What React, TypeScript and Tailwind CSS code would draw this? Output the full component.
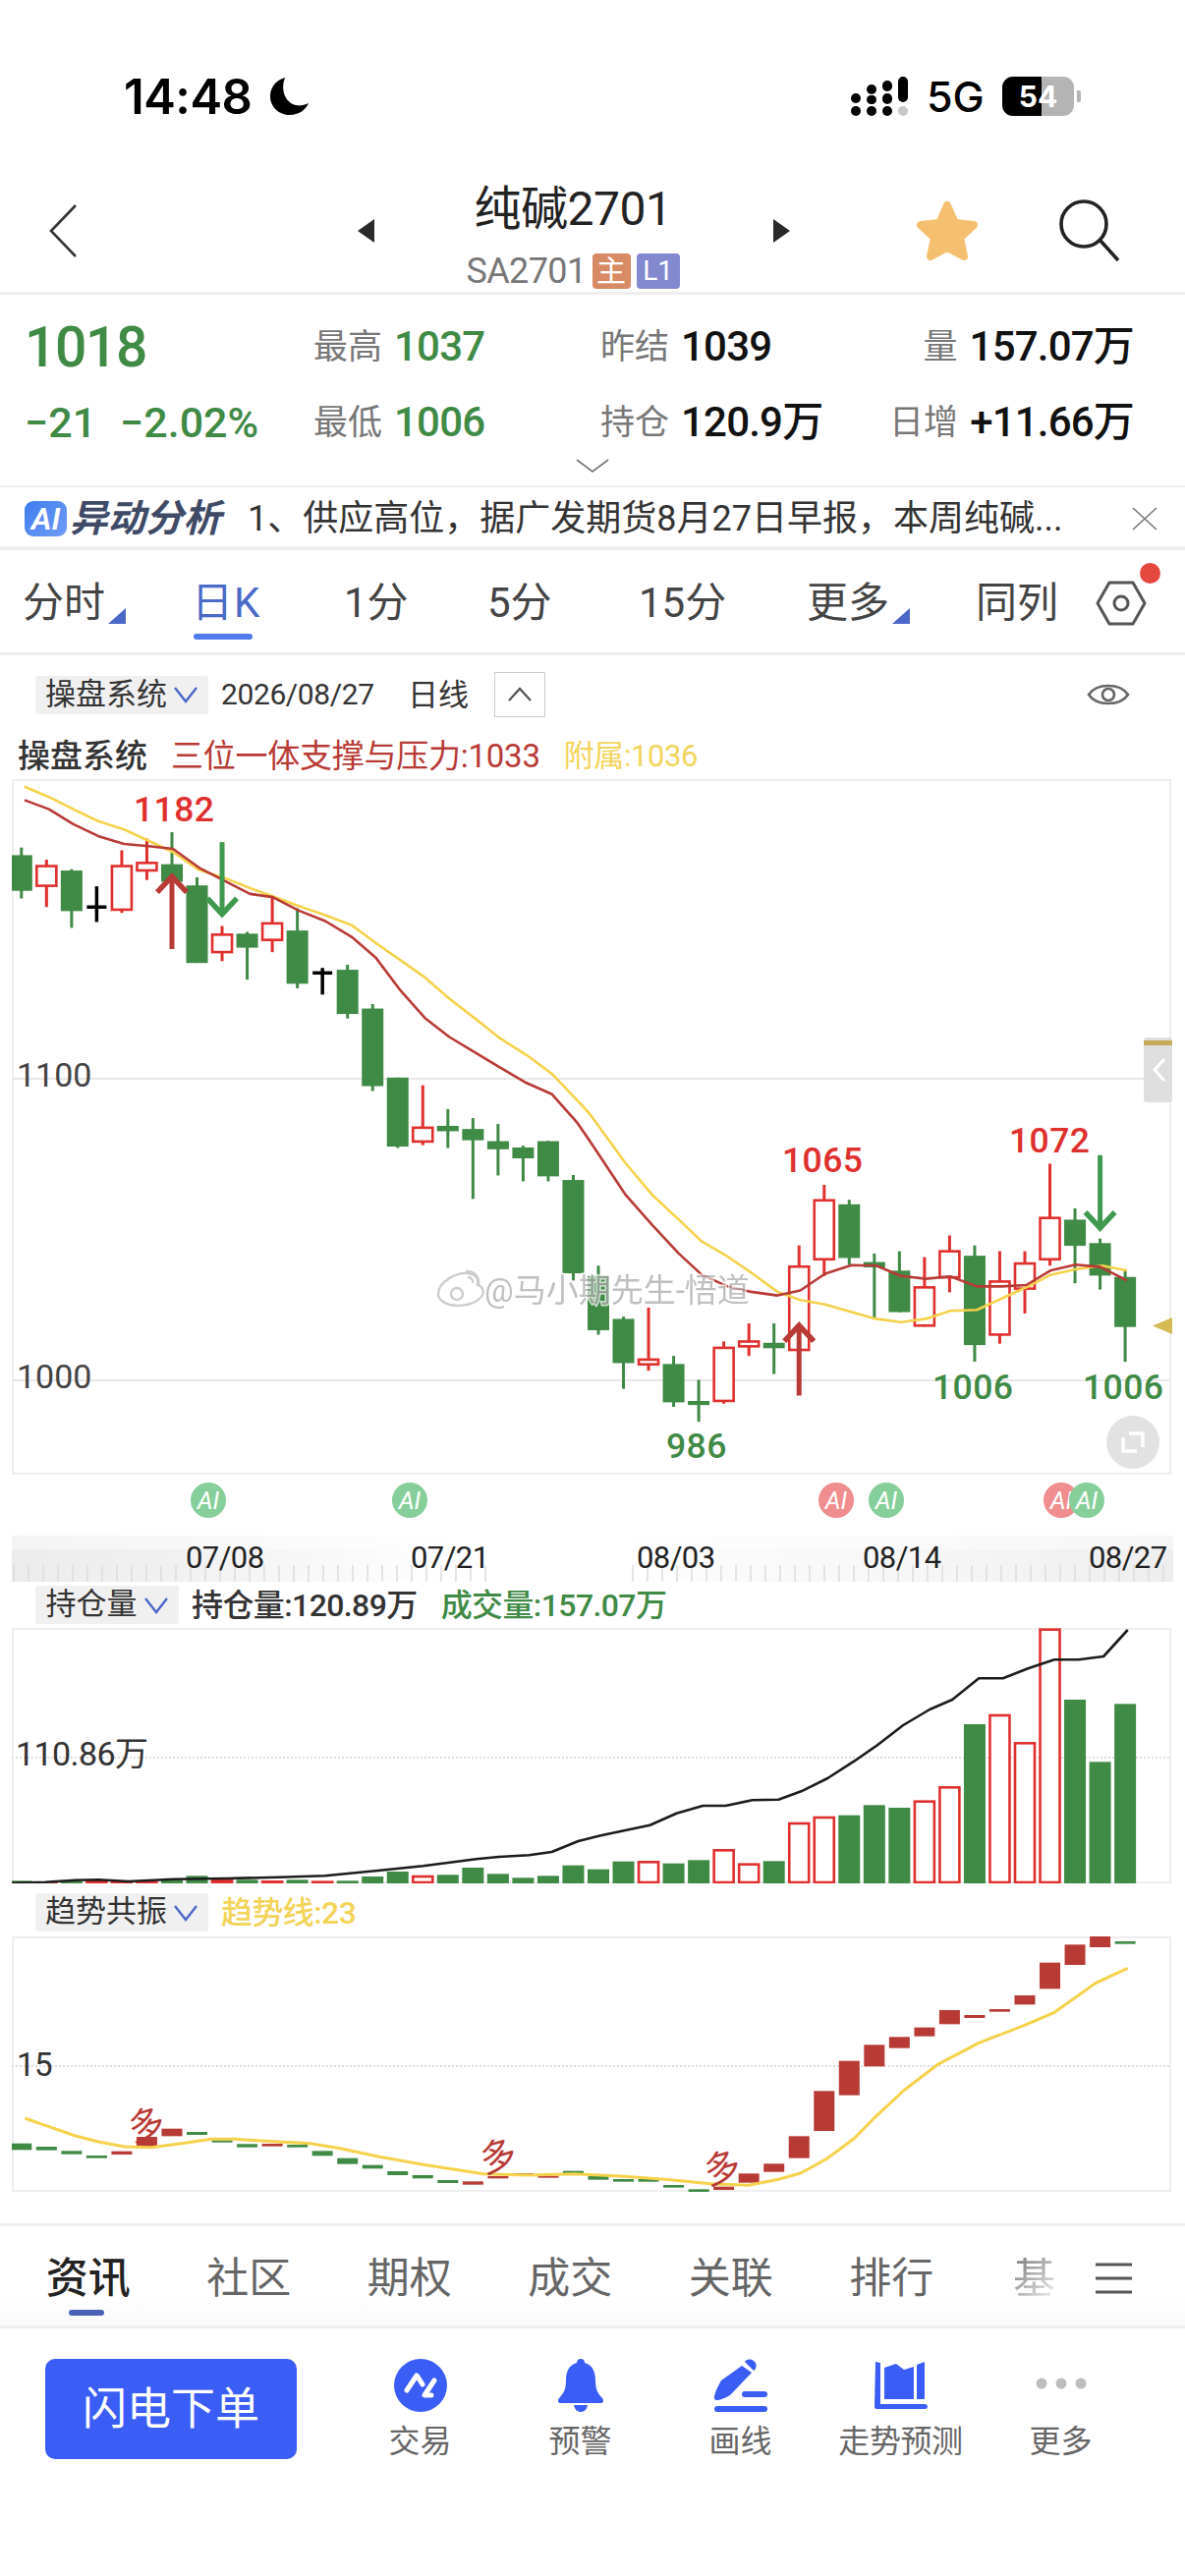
import React from "react";

const G = "#3f8a45";
const R = "#e0302e";
const X = (i: number) => 21.8 + 25.53 * i;
const Y = (z: number) => 780 + z / 2.178;
const X3 = (z: number) => z / 2.613;
const X4 = (z: number) => 600 + z / 2.587;

// type, hi, top, bottom, lo (zoom units)
const candles: [string, number, number, number, number][] = [
  ["g", 180, 197, 276, 293], ["r", 207, 219, 267, 312], ["g", 228, 231, 321, 358], ["k", 266, 312, 312, 345],
  ["r", 186, 219, 320, 325], ["r", 160, 212, 233, 252], ["g", 146, 217, 256, 258], ["g", 246, 264, 436, 436],
  ["r", 354, 371, 414, 432], ["g", 367, 371, 402, 473], ["r", 290, 346, 387, 412], ["g", 315, 364, 482, 492],
  ["k", 447, 458, 458, 506], ["g", 440, 451, 549, 559], ["g", 527, 537, 709, 720], ["g", 690, 690, 843, 846],
  ["r", 707, 799, 834, 840], ["g", 760, 797, 809, 846], ["g", 780, 804, 829, 959], ["g", 793, 831, 849, 907],
  ["g", 841, 845, 869, 920], ["g", 830, 831, 909, 920], ["g", 906, 917, 1124, 1140], ["g", 1107, 1130, 1250, 1260],
  ["g", 1220, 1225, 1323, 1380], ["r", 1200, 1313, 1328, 1340], ["g", 1307, 1325, 1410, 1420], ["g", 1360, 1407, 1416, 1453],
  ["r", 1275, 1287, 1409, 1413], ["r", 1235, 1273, 1288, 1307], ["g", 1235, 1278, 1290, 1347], ["r", 1062, 1107, 1296, 1296],
  ["r", 928, 960, 1095, 1130], ["g", 961, 971, 1090, 1105], ["g", 1080, 1099, 1111, 1225], ["g", 1075, 1118, 1210, 1210],
  ["r", 1088, 1153, 1242, 1242], ["r", 1040, 1073, 1135, 1166], ["g", 1062, 1085, 1283, 1320], ["r", 1075, 1140, 1262, 1280],
  ["r", 1075, 1100, 1160, 1213], ["r", 881, 999, 1095, 1107], ["g", 980, 1005, 1063, 1146], ["g", 1047, 1057, 1129, 1160],
  ["g", 1115, 1132, 1243, 1320],
];

const mk = (a: number[][], b: number[][]) =>
  [...a.map(([x, y]) => [X3(x), Y(y)]), ...b.map(([x, y]) => [X4(x), Y(y)])];
const toPath = (p: number[][]) => p.map(([x, y], i) => `${i ? "L" : "M"}${x.toFixed(1)} ${y.toFixed(1)}`).join("");

const redLine = mk(
  [[65, 75], [130, 95], [195, 128], [262, 155], [330, 172], [395, 177], [460, 183], [530, 225], [600, 255], [665, 283], [725, 290], [795, 320], [865, 343], [935, 378], [1000, 425], [1065, 497], [1130, 558], [1195, 600], [1265, 635], [1330, 668], [1400, 702], [1468, 727], [1535, 790]],
  [[0, 830], [95, 950], [165, 1017], [235, 1080], [295, 1127], [360, 1152], [425, 1165], [495, 1173], [555, 1162], [620, 1125], [690, 1106], [755, 1107], [820, 1130], [885, 1136], [950, 1131], [1020, 1153], [1085, 1153], [1150, 1150], [1215, 1117], [1280, 1105], [1345, 1110], [1415, 1140]]
);
const yellowLine = mk(
  [[65, 45], [130, 68], [195, 95], [262, 122], [330, 140], [395, 165], [460, 190], [530, 230], [600, 248], [665, 270], [725, 288], [795, 310], [865, 330], [935, 352], [1000, 392], [1065, 430], [1130, 468], [1195, 515], [1265, 560], [1330, 603], [1400, 640], [1468, 682], [1535, 740]],
  [[0, 770], [95, 880], [165, 950], [235, 1005], [295, 1053], [360, 1085], [425, 1122], [495, 1165], [555, 1183], [620, 1193], [690, 1210], [755, 1225], [820, 1232], [885, 1225], [950, 1207], [1020, 1205], [1085, 1180], [1150, 1155], [1215, 1127], [1280, 1115], [1350, 1107], [1415, 1118]]
);

const Z5 = (z: number) => 1500 + z / 3;
const Z6 = (z: number) => 1920 + z / 3;

const volumes: [string, number][] = [
  ["g", 1243], ["r", 1247], ["g", 1245], ["r", 1243], ["r", 1245], ["r", 1245], ["g", 1240], ["g", 1228], ["r", 1240], ["g", 1240],
  ["r", 1243], ["g", 1240], ["r", 1244], ["g", 1243], ["g", 1230], ["g", 1215], ["r", 1227], ["g", 1225], ["g", 1203], ["g", 1222],
  ["g", 1234], ["g", 1228], ["g", 1196], ["g", 1208], ["g", 1184], ["r", 1183], ["g", 1190], ["g", 1180], ["r", 1147], ["r", 1190],
  ["g", 1183], ["r", 1065], ["r", 1047], ["g", 1043], ["g", 1012], ["g", 1020], ["r", 998], ["r", 955], ["g", 765], ["r", 735],
  ["r", 820], ["r", 473], ["g", 690], ["g", 880], ["g", 703],
];
const blackLine = [[16, 1250], [60, 1247], [100, 1241], [130, 1240], [170, 1245], [230, 1238], [300, 1236], [370, 1232], [430, 1228], [500, 1212], [560, 1198], [630, 1177], [660, 1170], [700, 1165], [730, 1155], [765, 1122], [795, 1105], [860, 1073], [895, 1037], [930, 1014], [960, 1014], [995, 997], [1030, 995], [1060, 970], [1095, 930], [1130, 878], [1160, 830], [1195, 768], [1230, 720], [1260, 690], [1295, 625], [1327, 625], [1360, 595], [1395, 568], [1427, 568], [1460, 558], [1492, 477]].map(([x, y]) => [x / 1.3, Z5(y)]);

const trend: [string, number, number][] = [
  ["g", 785, 805], ["g", 795, 806], ["g", 808, 818], ["g", 822, 830], ["r", 809, 819], ["r", 765, 795], ["r", 740, 763], ["g", 750, 759], ["g", 775, 782], ["g", 787, 797],
  ["r", 786, 794], ["g", 789, 797], ["g", 808, 823], ["g", 830, 848], ["g", 851, 862], ["g", 870, 882], ["g", 882, 892], ["g", 897, 906], ["r", 901, 911], ["r", 885, 892],
  ["r", 876, 882], ["r", 884, 890], ["g", 869, 877], ["g", 885, 896], ["g", 894, 902], ["g", 894, 902], ["g", 912, 920], ["g", 925, 935], ["r", 917, 927], ["r", 877, 905],
  ["r", 847, 872], ["r", 763, 830], ["r", 625, 747], ["r", 533, 638], ["r", 484, 550], ["r", 460, 494], ["r", 431, 458], ["r", 378, 421], ["r", 393, 402], ["r", 375, 383],
  ["r", 333, 361], ["r", 233, 313], ["r", 178, 240], ["r", 153, 186], ["g", 168, 176],
];
const trendLine = [[33, 708], [60, 730], [100, 762], [130, 780], [165, 795], [200, 797], [240, 785], [280, 772], [310, 772], [350, 778], [410, 785], [450, 800], [500, 825], [560, 850], [640, 878], [700, 882], [760, 878], [820, 885], [880, 895], [940, 908], [990, 913], [1030, 895], [1060, 875], [1095, 830], [1130, 770], [1160, 700], [1195, 625], [1240, 545], [1295, 478], [1355, 425], [1395, 385], [1450, 295], [1492, 250]].map(([x, y]) => [x / 1.3, Z6(y)]);

function Caret() {
  return (
    <svg width="26" height="18" viewBox="0 0 26 18" className="shrink-0">
      <path d="M2 2 L13 16 L24 2" fill="none" stroke="#4a66c8" strokeWidth="2.4" />
    </svg>
  );
}

function Pill({ label, w }: { label: string; w: string }) {
  return (
    <div className={`flex h-[39px] items-center justify-center gap-[6px] rounded-[3px] bg-[#f0f0f0] text-[31px] text-[#333] ${w}`}>
      <span>{label}</span>
      <Caret />
    </div>
  );
}

function Arrow({ x, from, tip, color, dir }: { x: number; from: number; tip: number; color: string; dir: 1 | -1 }) {
  return (
    <g stroke={color} fill="none" strokeWidth="5">
      <line x1={x} y1={from} x2={x} y2={tip + dir * 3} />
      <path d={`M${x - 15} ${tip + dir * 18} L${x} ${tip + dir * 2} L${x + 15} ${tip + dir * 18}`} strokeWidth="5.5" />
    </g>
  );
}

function Frame({ top, bottom }: { top: number; bottom: number }) {
  return (
    <g stroke="#eeeeee" strokeWidth="2">
      <line x1="13" y1={top} x2="13" y2={bottom} />
      <line x1="1191" y1={top} x2="1191" y2={bottom} />
      <line x1="12" y1={top + 1} x2="1192" y2={top + 1} />
      <line x1="12" y1={bottom - 1} x2="1192" y2={bottom - 1} />
    </g>
  );
}

function MainChart() {
  const labels: [string, number, number, string][] = [
    ["1182", 136, 836, R], ["1065", 796, 1193, R], ["1072", 1027, 1173, R],
    ["986", 678, 1484, G], ["1006", 949, 1424, G], ["1006", 1102, 1424, G],
  ];
  return (
    <svg className="mx-[12px] block h-[708px] w-[1182px]" viewBox="12 793 1182 708">
      <Frame top={793} bottom={1501} />
      <line x1="12" y1="1098" x2="1192" y2="1098" stroke="#e8e8e8" strokeWidth="2" />
      <line x1="12" y1="1405" x2="1192" y2="1405" stroke="#e8e8e8" strokeWidth="2" />
      <text x="17" y="1106" fontSize="34" fill="#444">1100</text>
      <text x="17" y="1413" fontSize="34" fill="#444">1000</text>
      {candles.map(([t, hi, top, bot, lo], i) => {
        const x = X(i);
        if (t === "k") {
          return (
            <g key={i} stroke="#000" strokeWidth="3.5">
              <line x1={x} y1={Y(hi)} x2={x} y2={Y(lo)} />
              <line x1={x - 10} y1={Y(top)} x2={x + 10} y2={Y(top)} />
            </g>
          );
        }
        if (t === "g") {
          return (
            <g key={i} fill={G}>
              <rect x={x - 1.5} y={Y(hi)} width="3" height={Y(lo) - Y(hi)} />
              <rect x={x - 11} y={Y(top)} width="22" height={Y(bot) - Y(top)} />
            </g>
          );
        }
        return (
          <g key={i}>
            <rect x={x - 1.5} y={Y(hi)} width="3" height={Y(lo) - Y(hi)} fill={R} />
            <rect x={x - 10} y={Y(top) + 1} width="20" height={Y(bot) - Y(top) - 2} fill="#fff" stroke={R} strokeWidth="2.6" />
          </g>
        );
      })}
      <path d={toPath(yellowLine)} fill="none" stroke="#f5d24b" strokeWidth="2.6" strokeLinejoin="round" />
      <path d={toPath(redLine)} fill="none" stroke="#b83a35" strokeWidth="2.6" strokeLinejoin="round" />
      <Arrow x={X(6)} from={Y(405)} tip={Y(240)} color="#b83a35" dir={1} />
      <Arrow x={X(8)} from={Y(168)} tip={Y(332)} color="#3f9a4f" dir={-1} />
      <Arrow x={X(31)} from={Y(1395)} tip={Y(1235)} color="#b83a35" dir={1} />
      <Arrow x={X(43)} from={Y(862)} tip={Y(1028)} color="#3f9a4f" dir={-1} />
      {labels.map(([t, x, y, c], i) => (
        <text key={i} x={x} y={y} fontSize="35.5" fontWeight="500" fill={c} letterSpacing="0.4">{t}</text>
      ))}
      <g opacity="0.75">
        <g fill="none" stroke="#bdbdbd" strokeWidth="2.4">
          <path d="M446 1317 c0 -12 18 -22 30 -21 c10 1 11 7 10 12 c5 1 7 6 5 10 c-4 7 -14 11 -24 11 c-12 0 -21 -5 -21 -12 z" fill="#ffffff" />
          <circle cx="465" cy="1317" r="6" />
          <path d="M474 1294 c8 -1 14 5 13 13 M476 1300 c3 0 6 2 5 6" />
        </g>
        <text x="493" y="1325" fontSize="33" fill="#ababab" stroke="#ffffff" strokeWidth="3" className="[paint-order:stroke]">@马小期先生-悟道</text>
      </g>
      <rect x="1164" y="1056" width="29" height="66" rx="3" fill="#dedede" />
      <rect x="1164" y="1059" width="29" height="5" fill="#c5aa5a" />
      <path d="M1185 1078 L1175 1089 L1185 1100" fill="none" stroke="#ffffff" strokeWidth="3" />
      <path d="M1173 1349.5 L1193 1341 L1193 1358 Z" fill="#d6bb55" />
      <circle cx="1153" cy="1468" r="27" fill="#e2e2e2" />
      <path d="M1143 1463 L1143 1477 L1157 1477 M1149 1459 L1163 1459 L1163 1473" fill="none" stroke="#fff" strokeWidth="3.4" />
    </svg>
  );
}

function AiRow() {
  const marks: [number, string][] = [[212, "#86cf9a"], [417, "#86cf9a"], [851, "#ef8d8f"], [902, "#86cf9a"], [1080, "#ef8d8f"], [1106, "#86cf9a"]];
  return (
    <svg className="block h-[62px] w-[1206px]" viewBox="0 1501 1206 62">
      {marks.map(([x, c], i) => (
        <g key={i}>
          <circle cx={x} cy="1527" r="18" fill={c} />
          <text x={x} y="1536" textAnchor="middle" fontSize="25" fontStyle="italic" fill="#fff">AI</text>
        </g>
      ))}
    </svg>
  );
}

function DateAxis() {
  const ticks = Array.from({ length: 79 }, (_, i) => 14 + i * 15);
  const dates: [string, number][] = [["07/08", 189], ["07/21", 418], ["08/03", 648], ["08/14", 878], ["08/27", 1108]];
  return (
    <svg className="mx-[12px] block h-[47px] w-[1182px] bg-[linear-gradient(90deg,#ececec_0%,#f1f1f1_14%,#f8f8f8_26%,#ffffff_38%,#ffffff_53%,#fbfbfb_60%,#f6f6f6_80%,#eeeeee_100%)]" viewBox="12 1563 1182 47">
      <rect x="12" y="1563" width="1182" height="14" fill="#ffffff" opacity="0.45" />
      {ticks.filter((x) => x < 495 || x > 640).map((x, i) => (
        <line key={i} x1={x} y1="1593" x2={x} y2="1610" stroke="#dcdcdc" strokeWidth="1.5" />
      ))}
      {dates.map(([d, x]) => (
        <text key={d} x={x} y="1596" fontSize="31" fill="#222" letterSpacing="-0.6">{d}</text>
      ))}
    </svg>
  );
}

function VolumeChart() {
  return (
    <svg className="mx-[12px] block h-[260px] w-[1182px]" viewBox="12 1657 1182 260">
      <Frame top={1657} bottom={1917} />
      <line x1="12" y1="1789" x2="1192" y2="1789" stroke="#dddddd" strokeWidth="2" strokeDasharray="2 2" />
      <text x="16" y="1797" fontSize="34" fill="#333" letterSpacing="-0.6">110.86万</text>
      {volumes.map(([t, top], i) => {
        const x = X(i);
        const y = Z5(top);
        return t === "g" ? (
          <rect key={i} x={x - 11} y={y} width="22" height={1917 - y} fill={G} />
        ) : (
          <rect key={i} x={x - 10} y={y + 1} width="20" height={Math.max(1917 - y - 2, 1)} fill="#fff" stroke={R} strokeWidth="2.6" />
        );
      })}
      <path d={toPath(blackLine)} fill="none" stroke="#1c1c1c" strokeWidth="2.6" strokeLinejoin="round" />
    </svg>
  );
}

function TrendChart() {
  const duo: [number, number][] = [[149, 2163], [507, 2195], [735, 2207]];
  return (
    <svg className="mx-[12px] block h-[260px] w-[1182px]" viewBox="12 1971 1182 260">
      <Frame top={1971} bottom={2231} />
      <line x1="12" y1="2103" x2="1192" y2="2103" stroke="#dddddd" strokeWidth="2" strokeDasharray="2 2" />
      <text x="17" y="2113" fontSize="33" fill="#333" letterSpacing="-0.6">15</text>
      {trend.map(([t, a, b], i) => (
        <rect key={i} x={X(i) - 10.5} y={Z6(a)} width="21" height={(b - a) / 3} fill={t === "g" ? G : "#b83a35"} />
      ))}
      <path d={toPath(trendLine)} fill="none" stroke="#f5d24b" strokeWidth="3" strokeLinejoin="round" />
      {duo.map(([x, y], i) => (
        <text key={i} x={x} y={y + 13} fontSize="37" textAnchor="middle" fill="#b83a35" transform={`rotate(-16 ${x} ${y})`}>多</text>
      ))}
    </svg>
  );
}

function StatusBar() {
  return (
    <div className="flex h-[40px] items-center">
      <span className="ml-[126px] w-[142px] text-[49px] font-semibold leading-none tracking-[-0.5px] text-black [font-family:Inter,sans-serif]">14:48</span>
      <svg className="ml-[6px]" width="42" height="40" viewBox="0 0 42 40">
        <path d="M16 1 C5 4 1 13 1 20 C1 31 10 39 21 39 C30 39 37 34 40 27 C36 29 31 30 27 29 C17 27 11 14 16 1 Z" fill="#000" />
      </svg>
      <svg className="ml-[550px]" width="60" height="40" viewBox="0 0 60 40">
        <g fill="#000">
          <rect x="0" y="17" width="10" height="10" rx="5" /><rect x="0" y="30" width="10" height="10" rx="5" />
          <rect x="16" y="8" width="10" height="10" rx="5" /><rect x="16" y="19" width="10" height="9" rx="4.5" /><rect x="16" y="30" width="10" height="10" rx="5" />
          <rect x="32" y="4" width="10" height="11" rx="5" /><rect x="32" y="17" width="10" height="11" rx="5" /><rect x="32" y="30" width="10" height="10" rx="5" />
          <rect x="48" y="0" width="10" height="26" rx="5" />
        </g>
        <rect x="48" y="30" width="10" height="10" rx="5" fill="#c8c8c8" />
      </svg>
      <span className="ml-[17px] w-[59px] text-[43px] font-medium leading-none text-black [font-family:Inter,sans-serif]">5G</span>
      <div className="relative ml-[18px] flex h-[40px] w-[73px] items-center justify-center overflow-hidden rounded-[11px] bg-[#b4b4b4] text-[30px] font-bold text-white [font-family:Inter,sans-serif]">
        <div className="absolute left-0 top-0 h-full w-[40px] bg-black" />
        <span className="relative">54</span>
      </div>
      <div className="ml-[3px] h-[12px] w-[4px] rounded-r-[2px] bg-[#b4b4b4]" />
    </div>
  );
}

function Header() {
  return (
    <div className="flex h-[182px] items-start border-b-[3px] border-[#eeeeee]">
      <svg className="ml-[49px] mt-[89px]" width="30" height="56" viewBox="0 0 30 56">
        <path d="M28 2 L3 28 L28 54" fill="none" stroke="#333" strokeWidth="2.6" />
      </svg>
      <svg className="ml-[284px] mt-[104px]" width="19" height="26" viewBox="0 0 19 26"><path d="M18 1 L1 13 L18 25 Z" fill="#2a2a2a" /></svg>
      <div className="ml-[21px] flex w-[380px] flex-col items-center pr-[20px]">
        <div className="mt-[72px] h-[46px] text-[48px] leading-[46px] tracking-[-0.5px] text-[#222]">纯碱2701</div>
        <div className="mt-[22px] flex h-[36px] items-center">
          <span className="text-[36px] leading-none tracking-[-0.6px] text-[#777]">SA2701</span>
          <span className="ml-[6px] flex h-[36px] w-[39px] items-center justify-center rounded-[4px] bg-[#d78a63] text-[30px] leading-none text-white">主</span>
          <span className="ml-[6px] flex h-[36px] w-[44px] items-center justify-center rounded-[4px] bg-[#8389cf] text-[28px] leading-none text-white">L1</span>
        </div>
      </div>
      <svg className="ml-[3px] mt-[104px]" width="19" height="26" viewBox="0 0 19 26"><path d="M1 1 L18 13 L1 25 Z" fill="#2a2a2a" /></svg>
      <svg className="ml-[126px] mt-[85px]" width="66" height="64" viewBox="0 0 66 64">
        <path d="M33 6 L41 24 L60 26 L46 39 L50 58 L33 49 L16 58 L20 39 L6 26 L25 24 Z" fill="#f4c070" stroke="#f4c070" strokeWidth="8" strokeLinejoin="round" />
      </svg>
      <svg className="ml-[81px] mt-[85px]" width="64" height="64" viewBox="0 0 64 64">
        <circle cx="25" cy="25" r="23" fill="none" stroke="#222" strokeWidth="3.6" />
        <line x1="42" y1="42" x2="60" y2="62" stroke="#222" strokeWidth="3.6" />
      </svg>
    </div>
  );
}

function Quote() {
  const lab = "text-[35px] leading-none text-[#777]";
  const num = "ml-[12px] text-[42px] leading-none font-medium tracking-[-0.8px]";
  return (
    <div className="relative h-[196px] border-b-2 border-[#eeeeee] pl-[25px] pr-[52px] pt-[27px]">
      <div className="grid grid-cols-[294px_292px_1fr_auto] grid-rows-[52px_77px]">
        <div className="self-center text-[57px] font-medium leading-none tracking-[-1.4px] text-[#3f8a45]">1018</div>
        <div className="flex items-center"><span className={lab}>最高</span><span className={`${num} text-[#3f8a45]`}>1037</span></div>
        <div className="flex items-center"><span className={lab}>昨结</span><span className={`${num} text-[#111]`}>1039</span></div>
        <div className="flex items-center justify-end"><span className={lab}>量</span><span className={`${num} text-[#111]`}>157.07万</span></div>
        <div className="flex items-center pt-[25px] text-[43px] font-medium leading-none text-[#3f8a45]"><span>−21</span><span className="ml-[24px]">−2.02%</span></div>
        <div className="flex items-center pt-[25px]"><span className={lab}>最低</span><span className={`${num} text-[#3f8a45]`}>1006</span></div>
        <div className="flex items-center pt-[25px]"><span className={lab}>持仓</span><span className={`${num} text-[#111]`}>120.9万</span></div>
        <div className="flex items-center justify-end pt-[25px]"><span className={lab}>日增</span><span className={`${num} text-[#111]`}>+11.66万</span></div>
      </div>
      <svg className="absolute left-[586px] top-[167px]" width="34" height="14" viewBox="0 0 34 14"><path d="M1 1 L17 13 L33 1" fill="none" stroke="#777" strokeWidth="1.6" /></svg>
    </div>
  );
}

function AiBar() {
  return (
    <div className="flex h-[64px] items-center border-b-4 border-[#eeeeee] pt-[4px]">
      <div className="ml-[25px] flex h-[36px] w-[43px] items-center justify-center rounded-[9px] bg-[linear-gradient(135deg,#3f7cf0,#6f9df5)] text-[32px] font-semibold italic leading-none text-white">AI</div>
      <span className="ml-[3px] w-[160px] text-[38.5px] font-bold italic leading-none text-[#3e4a66]">异动分析</span>
      <span className="ml-[21px] w-[841px] whitespace-nowrap text-[36px] leading-none text-[#333]">1、供应高位，据广发期货8月27日早报，本周纯碱...</span>
      <svg className="ml-[59px]" width="26" height="24" viewBox="0 0 26 24"><path d="M1 1 L25 23 M25 1 L1 23" stroke="#777" strokeWidth="1.6" /></svg>
    </div>
  );
}

function Tabs() {
  const tri = <svg className="ml-[3px] mt-[26px]" width="18" height="16" viewBox="0 0 18 16"><path d="M18 0 L18 16 L0 16 Z" fill="#4a66c8" /></svg>;
  const t = "whitespace-nowrap text-[42px] leading-none text-[#444]";
  return (
    <div className="flex h-[107px] items-center border-b-[3px] border-[#eeeeee] pt-[4px]">
      <div className="ml-[23px] flex w-[106px] items-center"><span className={t}>分时</span>{tri}</div>
      <div className="relative ml-[66px] w-[73px]">
        <span className="whitespace-nowrap text-[42px] leading-none tracking-[1px] text-[#4a6ac8]">日K</span>
        <div className="absolute left-[2px] top-[52px] h-[6px] w-[60px] rounded-[3px] bg-[#4f7aea]" />
      </div>
      <span className={`${t} ml-[82px] w-[60px]`}>1分</span>
      <span className={`${t} ml-[86px] w-[70px]`}>5分</span>
      <span className={`${t} ml-[84px] w-[86px]`}>15分</span>
      <div className="ml-[85px] flex w-[106px] items-center"><span className={t}>更多</span>{tri}</div>
      <span className={`${t} ml-[66px] w-[86px]`}>同列</span>
      <div className="relative ml-[36px]">
        <svg width="52" height="46" viewBox="0 0 52 46">
          <path d="M14 2 L38 2 L50 23 L38 44 L14 44 L2 23 Z" fill="none" stroke="#555" strokeWidth="3" strokeLinejoin="round" />
          <circle cx="26" cy="23" r="7" fill="none" stroke="#555" strokeWidth="3" />
        </svg>
        <div className="absolute left-[45px] top-[-18px] h-[21px] w-[21px] rounded-full bg-[#e5483f]" />
      </div>
    </div>
  );
}

function Toolbar() {
  return (
    <div className="flex h-[78px] items-center pl-[36px] pt-[2px]">
      <Pill label="操盘系统" w="w-[176px]" />
      <span className="ml-[13px] w-[165px] text-[30px] leading-none tracking-[-0.4px] text-[#333]">2026/08/27</span>
      <span className="ml-[25px] text-[31px] leading-none text-[#333]">日线</span>
      <div className="ml-[26px] flex h-[46px] w-[52px] items-center justify-center border border-[#cccccc]">
        <svg width="26" height="16" viewBox="0 0 26 16"><path d="M2 14 L13 2 L24 14" fill="none" stroke="#555" strokeWidth="2.2" /></svg>
      </div>
      <svg className="ml-[551px]" width="44" height="30" viewBox="0 0 44 30">
        <path d="M2 15 C10 3 34 3 42 15 C34 27 10 27 2 15 Z" fill="none" stroke="#666" strokeWidth="2.6" />
        <circle cx="22" cy="15" r="6" fill="none" stroke="#666" strokeWidth="2.6" />
      </svg>
    </div>
  );
}

function BottomTabs() {
  const items = ["社区", "期权", "成交", "关联", "排行"];
  return (
    <div className="relative flex h-[107px] items-center border-y-[3px] border-[#eeeeee] bg-[linear-gradient(180deg,#ffffff_70%,#fafafa_100%)] pl-[8px] pt-[5px]">
      <div className="relative w-[163.5px] text-center text-[43px] font-medium leading-none text-[#222]">
        资讯
        <div className="absolute left-[62px] top-[53px] h-[6px] w-[36px] rounded-[3px] bg-[#4a63b8]" />
      </div>
      {items.map((t) => (
        <div key={t} className="w-[163.5px] text-center text-[43px] leading-none text-[#666]">{t}</div>
      ))}
      <span className="ml-[42px] bg-[linear-gradient(135deg,#777777,#f4f4f4)] bg-clip-text text-[43px] leading-none text-transparent">基</span>
      <svg className="absolute left-[1115px] top-[37px]" width="37" height="32" viewBox="0 0 37 32">
        <path d="M0 2 H37 M0 16 H37 M0 30 H37" stroke="#555" strokeWidth="3" />
      </svg>
    </div>
  );
}

function BottomBar() {
  const B = "#3a5df5";
  return (
    <div className="flex items-start pl-[46px] pt-[31px]">
      <div className="flex h-[102px] w-[256px] items-center justify-center rounded-[10px] bg-[#3a5df5] text-[45px] leading-none text-white">闪电下单</div>
      <div className="ml-[44px] flex">
        <div className="flex w-[163px] flex-col items-center">
          <svg width="54" height="54" viewBox="0 0 54 54">
            <circle cx="27" cy="27" r="27" fill={B} />
            <path d="M23 17 L13 32 M24 18 L29 26 M41 22 L31 37 L38 37" stroke="#fff" strokeWidth="5" strokeLinecap="round" strokeLinejoin="round" fill="none" />
          </svg>
          <span className="mt-[14px] text-[32px] leading-none text-[#666]">交易</span>
        </div>
        <div className="flex w-[163px] flex-col items-center">
          <svg width="54" height="54" viewBox="0 0 54 54">
            <path d="M27 0 C30 0 31 2 31 4 C39 6 42 13 42 22 C42 30 44 35 49 40 C51 43 50 45 47 45 L7 45 C4 45 3 43 5 40 C10 35 12 30 12 22 C12 13 15 6 23 4 C23 2 24 0 27 0 Z" fill={B} />
            <path d="M20 47 L34 47 C33 52 30 54 27 54 C24 54 21 52 20 47 Z" fill={B} />
          </svg>
          <span className="mt-[14px] text-[32px] leading-none text-[#666]">预警</span>
        </div>
        <div className="flex w-[163px] flex-col items-center">
          <svg width="54" height="54" viewBox="0 0 54 54">
            <path d="M31 3 C33 0 37 0 40 2 C43 4 43 7 42 10 L40 12 Z" fill={B} />
            <path d="M28 7 L38 14 L17 36 C12 40 5 42 2 42 C0 42 0 40 0 38 C1 33 4 27 7 22 Z" fill={B} />
            <rect x="28" y="33" width="26" height="6" rx="3" fill={B} />
            <rect x="0" y="48" width="54" height="6" rx="3" fill={B} />
          </svg>
          <span className="mt-[14px] text-[32px] leading-none text-[#666]">画线</span>
        </div>
        <div className="flex w-[163px] flex-col items-center">
          <svg width="54" height="54" viewBox="0 0 54 54">
            <path d="M1 3 L6 4 L6 46 L51 46 C53 46 54 47 54 48.5 C54 50 53 51 51 51 L2 51 C1 51 0 50 0 49 Z" fill={B} />
            <path d="M10 9 L22 5 L30 11 L40 8 L40 41 L10 41 Z" fill={B} />
            <path d="M43 6 L51 3 L51 41 L43 41 Z" fill={B} />
          </svg>
          <span className="mt-[14px] text-[32px] leading-none tracking-[-0.4px] text-[#666]">走势预测</span>
        </div>
        <div className="flex w-[163px] flex-col items-center">
          <svg width="54" height="54" viewBox="0 0 54 54">
            <circle cx="7" cy="25" r="5.5" fill="#bdbdbd" /><circle cx="27" cy="25" r="5.5" fill="#bdbdbd" /><circle cx="47" cy="25" r="5.5" fill="#bdbdbd" />
          </svg>
          <span className="mt-[14px] text-[32px] leading-none text-[#666]">更多</span>
        </div>
      </div>
    </div>
  );
}

export default function App() {
  return (
    <div className="h-[2622px] w-[1206px] overflow-hidden bg-white pt-[78px] [font-family:Roboto,'Noto_Sans_CJK_SC',sans-serif]">
      <StatusBar />
      <Header />
      <Quote />
      <AiBar />
      <Tabs />
      <Toolbar />
      <div className="flex h-[48px] items-center whitespace-nowrap pl-[18px] text-[33px] leading-none">
        <span className="font-medium text-[#333]">操盘系统</span>
        <span className="ml-[24px] tracking-[-0.25px] text-[#b83a35]">三位一体支撑与压力:1033</span>
        <span className="ml-[24px] text-[31px] tracking-[-0.4px] text-[#f3d45a]">附属:1036</span>
      </div>
      <MainChart />
      <AiRow />
      <DateAxis />
      <div className="flex h-[47px] items-center pl-[36px]">
        <Pill label="持仓量" w="w-[146px]" />
        <span className="ml-[13px] text-[32px] font-medium leading-none tracking-[-0.6px] text-[#333]">持仓量:120.89万</span>
        <span className="ml-[24px] text-[32px] font-medium leading-none tracking-[-0.6px] text-[#3f8a45]">成交量:157.07万</span>
      </div>
      <VolumeChart />
      <div className="flex h-[54px] items-center pl-[36px] pt-[5px]">
        <Pill label="趋势共振" w="w-[176px]" />
        <span className="ml-[13px] text-[32px] font-medium leading-none tracking-[-0.6px] text-[#f3d45a]">趋势线:23</span>
      </div>
      <TrendChart />
      <div className="h-[32px]" />
      <BottomTabs />
      <BottomBar />
    </div>
  );
}
